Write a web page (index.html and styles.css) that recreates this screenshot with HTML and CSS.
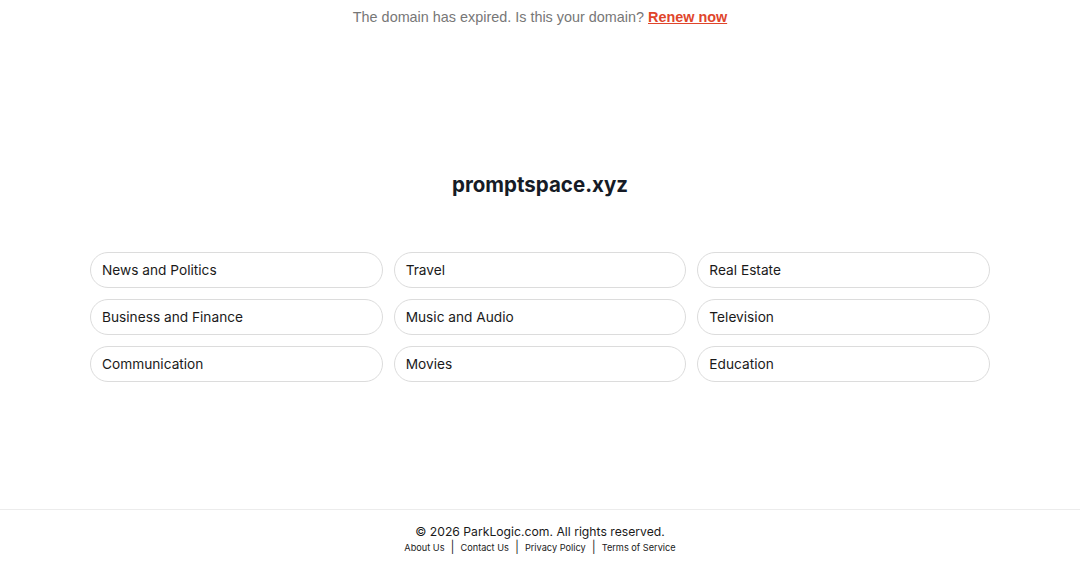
FILE: index.html
```html
<!DOCTYPE html>
<html>
<head>
<meta charset="utf-8">
<link rel="stylesheet" href="styles.css">
</head>
<body>
<div class="page">
  <div class="banner">The domain has expired. Is this your domain? <a href="#" class="renew">Renew now</a></div>
  <main class="main">
    <h1 class="title">promptspace.xyz</h1>
    <div class="grid">
      <a class="pill" href="#">News and Politics</a>
      <a class="pill" href="#">Travel</a>
      <a class="pill" href="#">Real Estate</a>
      <a class="pill" href="#">Business and Finance</a>
      <a class="pill" href="#">Music and Audio</a>
      <a class="pill" href="#">Television</a>
      <a class="pill" href="#">Communication</a>
      <a class="pill" href="#">Movies</a>
      <a class="pill" href="#">Education</a>
    </div>
  </main>
  <footer class="footer">
    <div class="copy">© 2026 ParkLogic.com. All rights reserved.</div>
    <div class="links">
      <a href="#">About Us</a><span class="sep">|</span><a href="#">Contact Us</a><span class="sep">|</span><a href="#">Privacy Policy</a><span class="sep">|</span><a href="#">Terms of Service</a>
    </div>
  </footer>
</div>
</body>
</html>
```

FILE: styles.css
```css
html, body {
  margin: 0;
  padding: 0;
  background: #fff;
}
body {
  font-family: "Liberation Sans", Arial, sans-serif;
  color: #111;
}
.page {
  height: 567px;
  display: flex;
  flex-direction: column;
}
.banner {
  text-align: center;
  font-size: 14.4px;
  line-height: 18px;
  padding-top: 8px;
  color: #777;
}
.renew {
  color: #e0452b;
  font-weight: bold;
  text-decoration: underline;
}
.main {
  flex: 1;
  padding-top: 148px;
}
.title {
  margin: 0;
  text-align: center;
  font-family: Inter, "Liberation Sans", sans-serif;
  font-size: 20.5px;
  font-weight: 700;
  line-height: 22px;
  color: #161b26;
}
.grid {
  width: 900px;
  margin: 56px auto 0;
  display: grid;
  grid-template-columns: repeat(3, 1fr);
  column-gap: 11px;
  row-gap: 11px;
}
.pill {
  display: block;
  height: 36px;
  box-sizing: border-box;
  border: 1px solid #dcdcdc;
  border-radius: 18px;
  padding: 0 11px;
  line-height: 34px;
  font-family: Inter, "Liberation Sans", sans-serif;
  font-size: 13.7px;
  color: #1a1a1a;
  text-decoration: none;
}
.footer {
  border-top: 1px solid #ececec;
  padding: 14px 0 12px;
  text-align: center;
  font-family: Inter, "Liberation Sans", sans-serif;
}
.copy {
  font-size: 12.2px;
  line-height: 16px;
  color: #1a1a1a;
}
.links {
  font-size: 9.2px;
  line-height: 14px;
  color: #222;
}
.links a {
  color: #222;
  text-decoration: none;
}
.sep {
  margin: 0 6px;
  font-size: 12px;
  color: #333;
}
```
